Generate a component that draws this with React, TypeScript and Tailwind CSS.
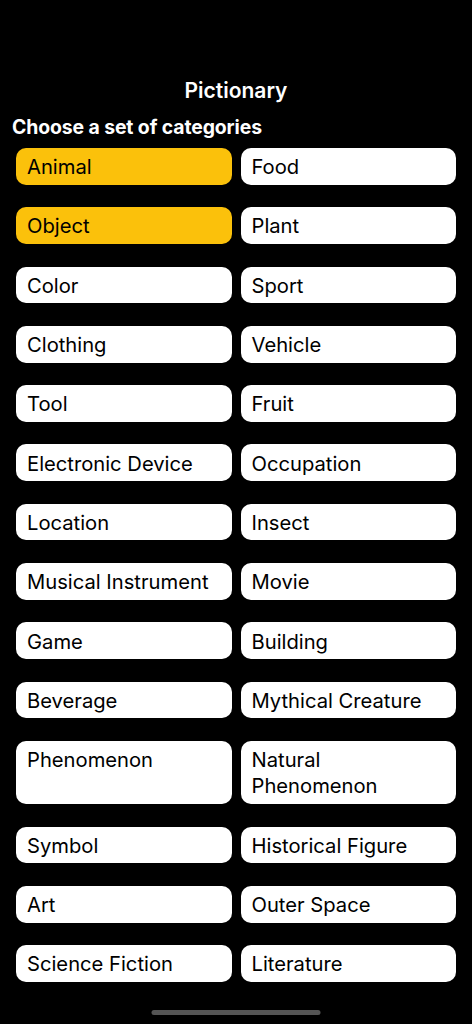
import { FC } from 'react';

const categories: string[] = [
    'Animal', 'Food',
    'Object', 'Plant',
    'Color', 'Sport',
    'Clothing', 'Vehicle',
    'Tool', 'Fruit',
    'Electronic Device', 'Occupation',
    'Location', 'Insect',
    'Musical Instrument', 'Movie',
    'Game', 'Building',
    'Beverage', 'Mythical Creature',
    'Phenomenon', 'Natural Phenomenon',
    'Symbol', 'Historical Figure',
    'Art', 'Outer Space',
    'Science Fiction', 'Literature',
];

const selected = new Set(['Animal', 'Object']);

const CategoryButton: FC<{ label: string; active: boolean }> = ({ label, active }) => (
    <button
        className={
            active
                ? 'flex items-start bg-[#fbc10b] text-black text-left rounded-[10px] pl-[11px] pr-2 pt-[6.17px] pb-[4.17px] text-[20.2px] leading-[26.33px] h-full'
                : 'flex items-start bg-white text-black text-left rounded-[10px] pl-[11px] pr-2 pt-[6.17px] pb-[4.17px] text-[20.2px] leading-[26.33px] h-full'
        }
    >
        <span>{label}</span>
    </button>
);

export default function App() {
    return (
        <div
            className="relative min-h-screen bg-black text-white pt-[79px] pb-[40px]"
            style={{ fontFamily: 'Inter, "Noto Sans", sans-serif' }}
        >
            <h1 className="text-center text-[21px] font-semibold leading-6">Pictionary</h1>
            <h2 className="px-3 mt-[12px] text-[19.4px] font-bold leading-6 tracking-[-0.1px]">
                Choose a set of categories
            </h2>
            <div className="grid grid-cols-2 gap-x-[9px] gap-y-[22.67px] px-4 mt-[9px]">
                {categories.map((c) => (
                    <CategoryButton key={c} label={c} active={selected.has(c)} />
                ))}
            </div>
            <div className="absolute bottom-[9px] left-1/2 -translate-x-1/2 w-[169px] h-[5px] rounded-full bg-[#555555]" />
        </div>
    );
}
